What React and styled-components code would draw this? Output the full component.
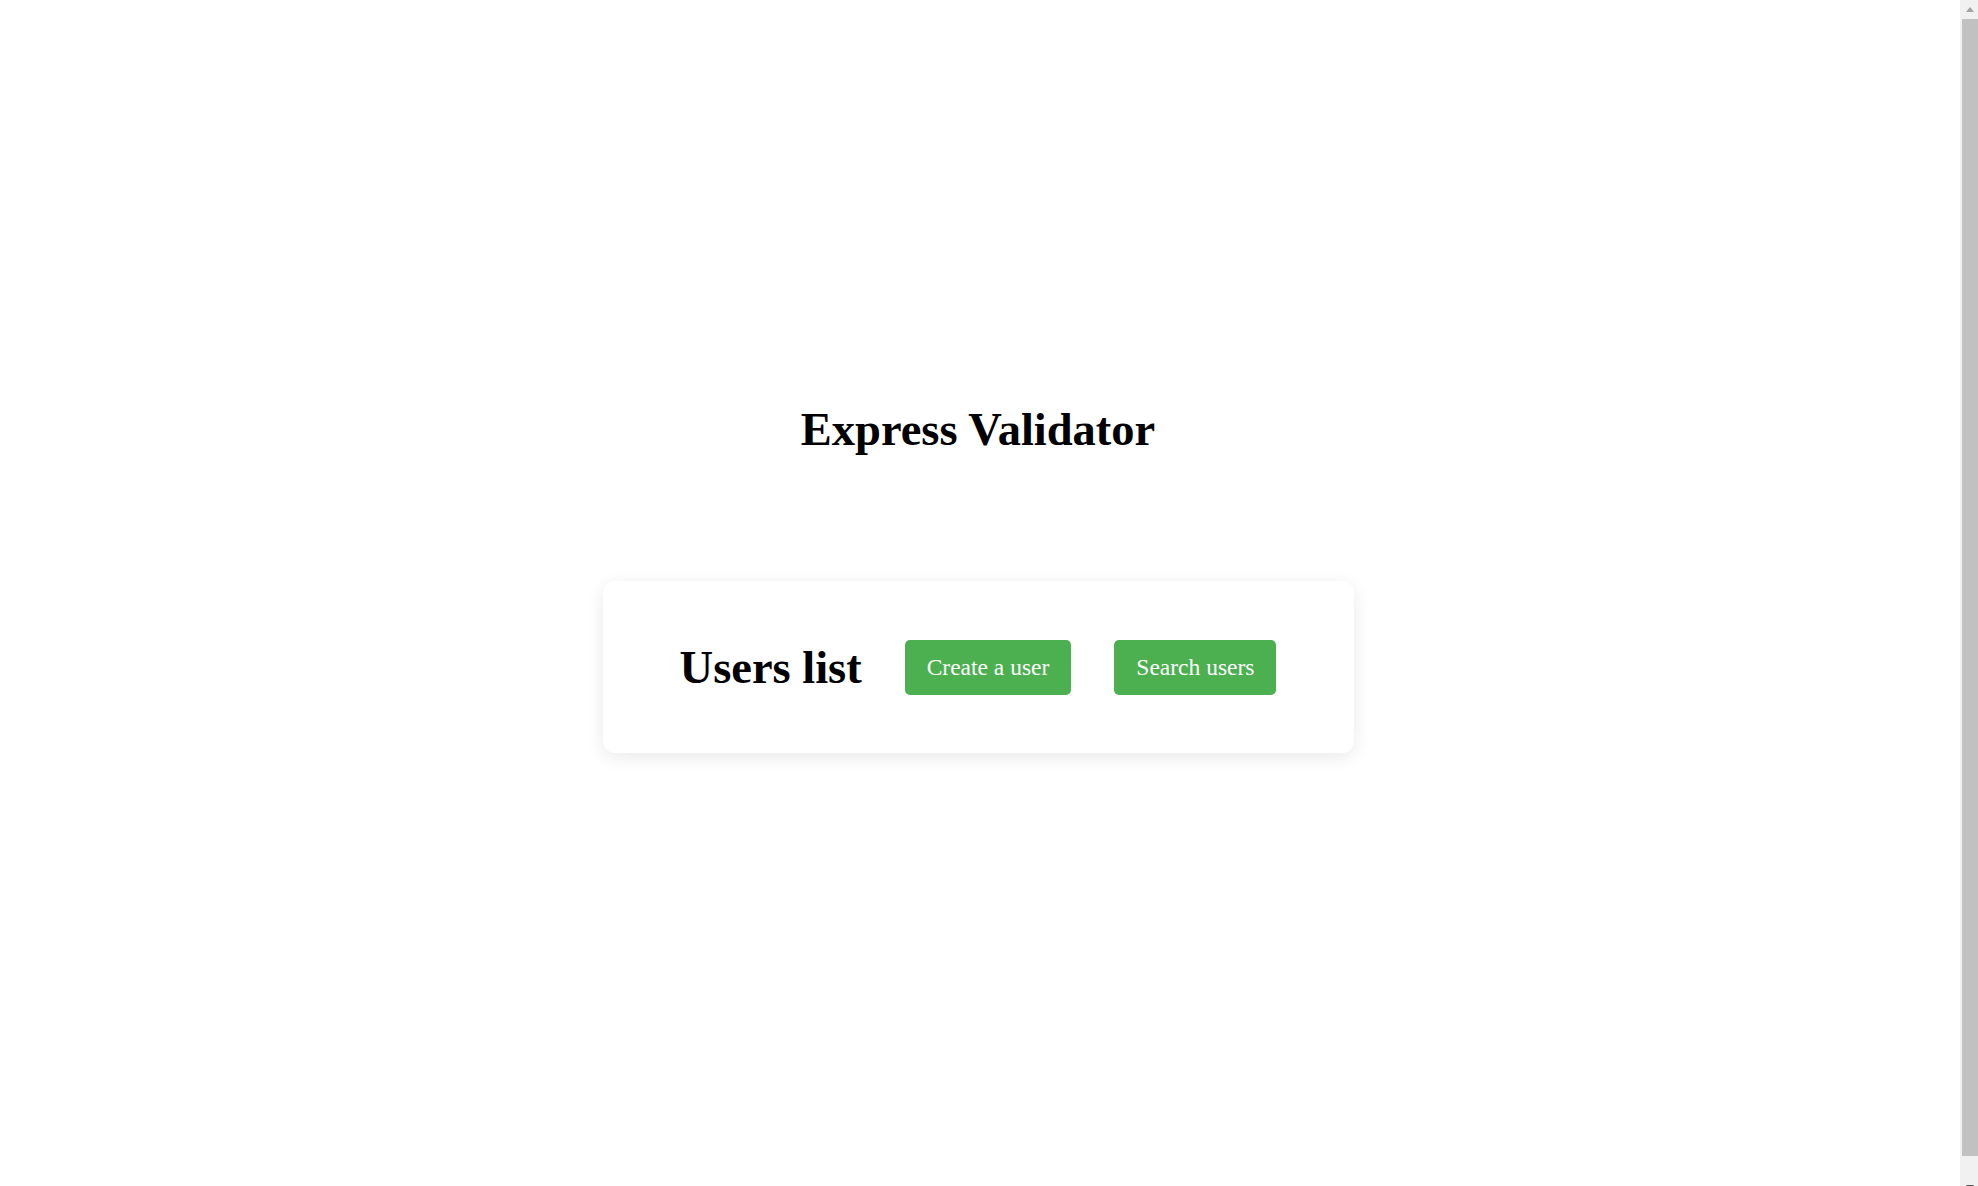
import React from "react";
import styled, { createGlobalStyle } from "styled-components";

const GlobalStyle = createGlobalStyle`
  html {
    background: #ffffff;
  }
  body {
    margin: 8px 30px 8px 8px;
    font-family: "Liberation Serif", "Times New Roman", serif;
    color: #000;
  }
`;

const Page = styled.main`
  min-height: 100vh;
  display: flex;
  flex-direction: column;
  align-items: center;
  padding-top: 395px;
  box-sizing: border-box;
`;

const Title = styled.h1`
  margin: 0;
  font-size: 46.5px;
  line-height: 53px;
  font-weight: 700;
`;

const Card = styled.section`
  margin-top: 125px;
  width: 751px;
  height: 172px;
  box-sizing: border-box;
  display: flex;
  align-items: center;
  justify-content: center;
  gap: 43px;
  background: #fff;
  border-radius: 12px;
  box-shadow: 0 4px 18px rgba(0, 0, 0, 0.09);
`;

const Heading = styled.h2`
  margin: 0;
  font-size: 46.5px;
  line-height: 53px;
  font-weight: 700;
`;

const Button = styled.button`
  height: 55px;
  padding: 0 22px;
  border: none;
  border-radius: 5px;
  background: #4caf50;
  color: #fff;
  font-family: "Liberation Serif", "Times New Roman", serif;
  font-size: 23.5px;
  cursor: pointer;
`;

/* browser scrollbar look-alike, overlaid on the right edge */
const ScrollTrack = styled.div`
  position: fixed;
  top: 0;
  right: 0;
  width: 18px;
  height: calc(100vh + 12px);
  background: #f1f1f1;
  display: flex;
  flex-direction: column;
`;

const Arrow = styled.div`
  display: flex;
  justify-content: center;
  padding-left: 2px;
  height: ${(p) => p.$h}px;
  padding-top: ${(p) => p.$top}px;
  box-sizing: border-box;
  &::before {
    content: "";
    width: 0;
    height: 0;
    border-left: 4.5px solid transparent;
    border-right: 4.5px solid transparent;
    ${(p) =>
      p.$down
        ? `border-top: 5px solid ${p.$color};`
        : `border-bottom: 5px solid ${p.$color};`}
  }
`;

const Thumb = styled.div`
  margin-left: 2px;
  height: 1137px;
  background: #c1c1c1;
`;

export default function App() {
  return (
    <>
      <GlobalStyle />
      <Page>
        <Title>Express Validator</Title>
        <Card>
          <Heading>Users list</Heading>
          <Button>Create a user</Button>
          <Button>Search users</Button>
        </Card>
      </Page>
      <ScrollTrack aria-hidden="true">
        <Arrow $h={19} $top={7} $color="#a3a3a3" />
        <Thumb />
        <Arrow $h={40} $top={29} $down $color="#505050" />
      </ScrollTrack>
    </>
  );
}
